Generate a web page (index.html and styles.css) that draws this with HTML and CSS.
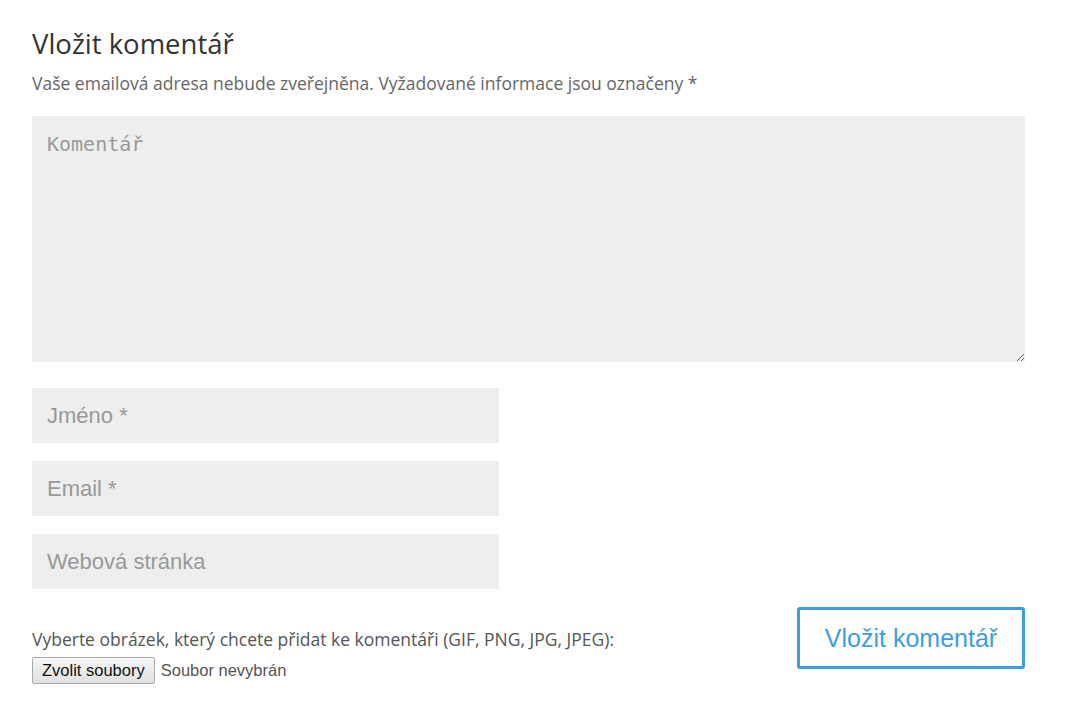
FILE: index.html
```html
<!DOCTYPE html>
<html lang="cs">
<head>
<meta charset="utf-8">
<title>Vložit komentář</title>
<link rel="stylesheet" href="styles.css">
</head>
<body>
<div class="respond">
  <h3 class="reply-title">Vložit komentář</h3>
  <p class="notes">Vaše emailová adresa nebude zveřejněna. Vyžadované informace jsou označeny *</p>
  <form class="comment-form">
    <textarea class="comment" placeholder="Komentář"></textarea>
    <div class="fields">
      <input class="field" type="text" placeholder="Jméno *">
      <input class="field" type="text" placeholder="Email *">
      <input class="field" type="text" placeholder="Webová stránka">
    </div>
    <div class="bottom">
      <div class="upload">
        <label class="upload-label">Vyberte obrázek, který chcete přidat ke komentáři (GIF, PNG, JPG, JPEG):</label>
        <div class="file">
          <button type="button" class="file-btn">Zvolit soubory</button>
          <span class="file-name">Soubor nevybrán</span>
        </div>
      </div>
      <button type="button" class="submit">Vložit komentář</button>
    </div>
  </form>
</div>
</body>
</html>
```
FILE: styles.css
```css
html, body {
  margin: 0;
  padding: 0;
  background: #fff;
}
.respond {
  width: 993px;
  padding: 25px 0 0 32px;
  font-family: "Open Sans", "Liberation Sans", sans-serif;
}
.reply-title {
  margin: 0;
  font-size: 27.5px;
  font-weight: 400;
  line-height: 38px;
  color: #333;
}
.notes {
  margin: 8px 0 0;
  font-size: 17.5px;
  line-height: 24px;
  color: #666;
}
.comment-form {
  margin-top: 21px;
  display: flex;
  flex-direction: column;
}
.comment {
  box-sizing: border-box;
  width: 993px;
  height: 246px;
  margin: 0;
  border: 0;
  background: #eee;
  padding: 15px 15px;
  font-family: "DejaVu Sans Mono", monospace;
  font-size: 20px;
  line-height: 26px;
  color: #333;
  resize: vertical;
  outline: none;
}
.comment::placeholder {
  color: #9a9a9a;
}
.fields {
  margin-top: 26px;
  display: flex;
  flex-direction: column;
  gap: 18px;
}
.field {
  box-sizing: border-box;
  width: 467px;
  height: 55px;
  margin: 0;
  border: 0;
  background: #eee;
  padding: 0 15px;
  font-family: "Liberation Sans", Arial, sans-serif;
  font-size: 22px;
  color: #333;
  outline: none;
}
.field::placeholder {
  color: #999;
}
.bottom {
  margin-top: 18px;
  display: flex;
  justify-content: space-between;
  align-items: flex-start;
}
.upload {
  padding-top: 20px;
  display: flex;
  flex-direction: column;
  gap: 6px;
}
.upload-label {
  font-size: 17.5px;
  line-height: 24px;
  color: #555;
}
.file {
  display: flex;
  align-items: center;
  gap: 6px;
  font-family: "Liberation Sans", Arial, sans-serif;
  font-size: 16.5px;
}
.file-btn {
  box-sizing: border-box;
  height: 27px;
  padding: 0 9px;
  border: 1px solid #a9a9a9;
  border-radius: 2px;
  background: linear-gradient(#f6f6f6, #e0e0e0);
  font-family: "Liberation Sans", Arial, sans-serif;
  font-size: 16.5px;
  color: #111;
}
.file-name {
  color: #555;
}
.submit {
  box-sizing: border-box;
  width: 228px;
  height: 62px;
  border: 3px solid #3d9de0;
  border-radius: 3px;
  background: #fff;
  font-family: "Liberation Sans", Arial, sans-serif;
  font-size: 25px;
  color: #3d9de0;
  padding: 0;
}
```
